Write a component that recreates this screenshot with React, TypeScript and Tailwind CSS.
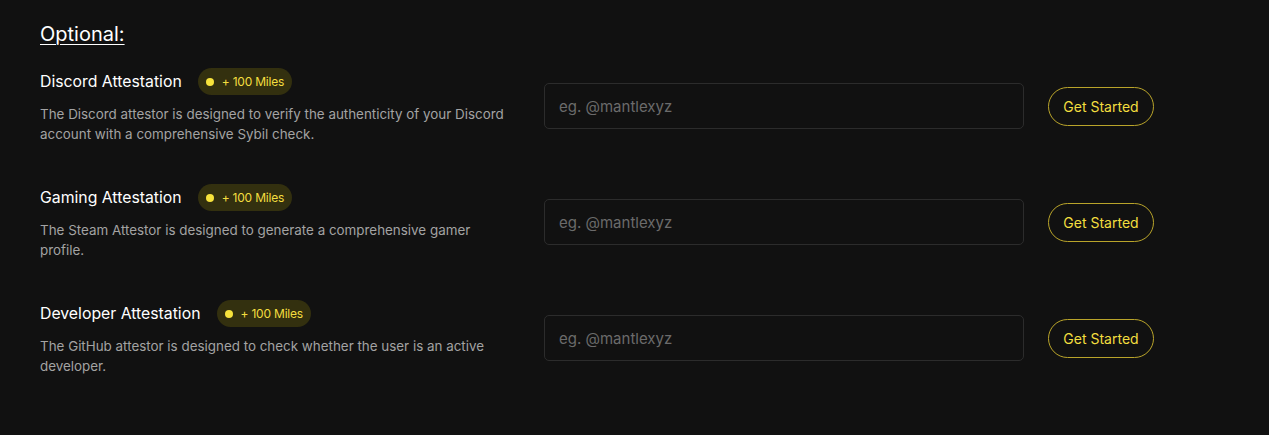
const rows = [
  {
    title: 'Discord Attestation',
    desc: 'The Discord attestor is designed to verify the authenticity of your Discord account with a comprehensive Sybil check.',
  },
  {
    title: 'Gaming Attestation',
    desc: 'The Steam Attestor is designed to generate a comprehensive gamer profile.',
  },
  {
    title: 'Developer Attestation',
    desc: 'The GitHub attestor is designed to check whether the user is an active developer.',
  },
]

const App = () => {
  return (
    <div className="min-h-screen bg-[#111111] px-10 pt-[21px] pb-10 font-['Inter',sans-serif] text-white">
      <h2 className="text-[20px] leading-[26px] font-normal underline underline-offset-[3px] decoration-1">Optional:</h2>

      <div className="mt-[21px] flex flex-col gap-[40px]">
        {rows.map((row) => (
          <div key={row.title} className="flex items-center">
            <div className="w-[472px] shrink-0">
              <div className="flex items-center gap-4">
                <span className="text-[15.8px] leading-[27px] text-white">{row.title}</span>
                <span className="flex h-[27px] items-center gap-[8px] rounded-full bg-[#33300f] px-[8px] text-[12px] tracking-[-0.2px] text-[#f3de3f]">
                  <span className="h-[8px] w-[8px] rounded-full bg-[#f6e23c]" />
                  + 100 Miles
                </span>
              </div>
              <p className="mt-[9px] text-[13.4px] leading-[20px] text-[#a3a3a3]">{row.desc}</p>
            </div>
            <input
              type="text"
              placeholder="eg. @mantlexyz"
              className="ml-8 h-[46px] w-[480px] rounded-[5px] border border-[#2c2c2c] bg-[#111111] px-[14px] text-[15px] text-white outline-none placeholder:text-[#6b6b6b]"
            />
            <button className="ml-6 h-[39px] w-[106px] rounded-full border border-[#b9a42a] text-[14px] text-[#f3de3f]">
              Get Started
            </button>
          </div>
        ))}
      </div>
    </div>
  )
}

export default App
